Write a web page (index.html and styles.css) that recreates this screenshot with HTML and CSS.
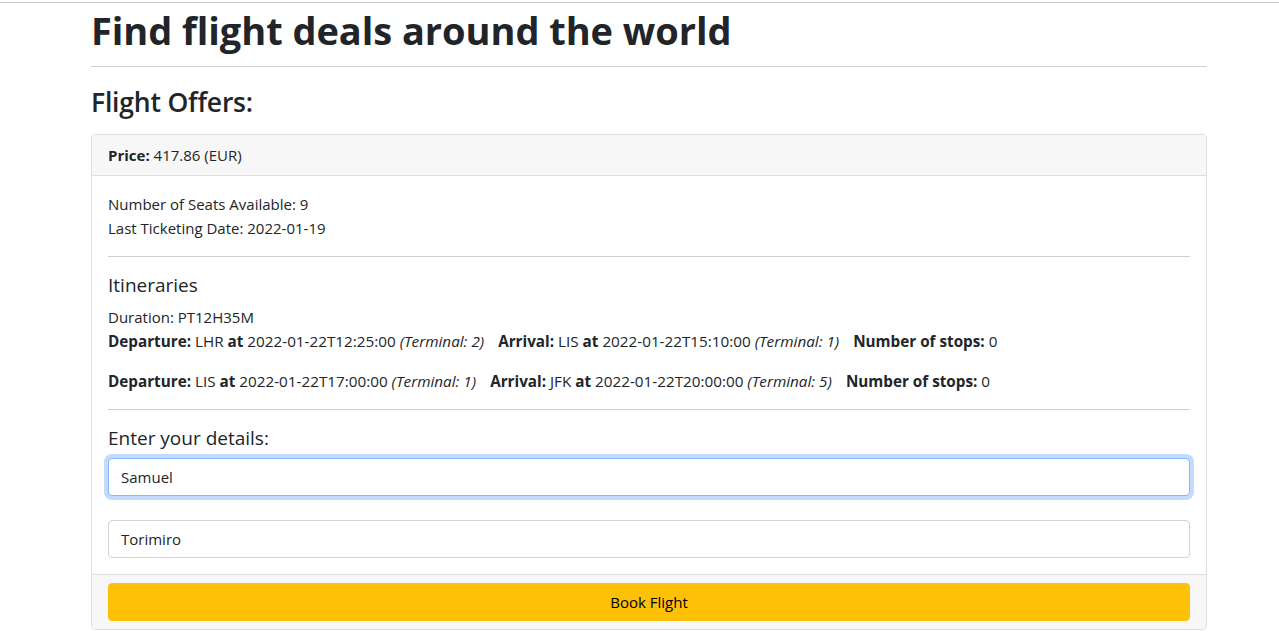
FILE: index.html
```html
<!DOCTYPE html>
<html lang="en">
<head>
<meta charset="utf-8">
<title>Flight deals</title>
<link rel="stylesheet" href="styles.css">
</head>
<body>
<div class="topline"></div>
<main class="container">
  <h1 class="title">Find flight deals around the world</h1>
  <hr class="rule">
  <h2 class="subtitle">Flight Offers:</h2>
  <section class="card">
    <div class="card-header"><b>Price:</b> 417.86 (EUR)</div>
    <div class="card-body">
      <p class="line">Number of Seats Available: 9</p>
      <p class="line">Last Ticketing Date: 2022-01-19</p>
      <hr class="divider">
      <h5 class="section-title">Itineraries</h5>
      <p class="line">Duration: PT12H35M</p>
      <p class="segment">
        <span class="part"><b>Departure:</b> LHR <b>at</b> 2022-01-22T12:25:00 <i>(Terminal: 2)</i></span>
        <span class="part"><b>Arrival:</b> LIS <b>at</b> 2022-01-22T15:10:00 <i>(Terminal: 1)</i></span>
        <span class="part"><b>Number of stops:</b> 0</span>
      </p>
      <p class="segment">
        <span class="part"><b>Departure:</b> LIS <b>at</b> 2022-01-22T17:00:00 <i>(Terminal: 1)</i></span>
        <span class="part"><b>Arrival:</b> JFK <b>at</b> 2022-01-22T20:00:00 <i>(Terminal: 5)</i></span>
        <span class="part"><b>Number of stops:</b> 0</span>
      </p>
      <hr class="divider">
      <h5 class="section-title">Enter your details:</h5>
      <form class="details">
        <input class="field field-focus" type="text" value="Samuel">
        <input class="field" type="text" value="Torimiro">
      </form>
    </div>
    <div class="card-footer">
      <button class="btn-book" type="button">Book Flight</button>
    </div>
  </section>
</main>
</body>
</html>
```
FILE: styles.css
```css
* { box-sizing: border-box; }
html, body { margin: 0; padding: 0; background: #fff; }
body {
  font-family: "Open Sans", "Noto Sans", sans-serif;
  font-size: 15px;
  line-height: 24px;
  color: #212529;
}
.topline {
  height: 3px;
  border-bottom: 1px solid #c6c6c6;
}
.container {
  width: 1116px;
  margin-left: 91px;
}
.title {
  margin: 3px 0 0;
  font-size: 38px;
  line-height: 48px;
  font-weight: 700;
  letter-spacing: -0.05px;
}
.rule {
  margin: 12px 0 0;
  border: 0;
  border-top: 1px solid #d0d0d0;
}
.subtitle {
  margin: 18px 0 0;
  font-size: 26.5px;
  line-height: 34px;
  font-weight: 600;
  letter-spacing: -0.2px;
}
.card {
  margin-top: 15px;
  border: 1px solid #dfdfdf;
  border-radius: 4px;
  overflow: hidden;
}
.card-header {
  background: #f7f7f7;
  border-bottom: 1px solid #dfdfdf;
  padding: 8px 16px;
  height: 41px;
  line-height: 24px;
}
.card-body {
  padding: 16px 16px 16px;
}
.line { margin: 0; }
.divider {
  margin: 16px 0;
  border: 0;
  border-top: 1px solid #d0d0d0;
}
.section-title {
  margin: 0 0 8px;
  font-size: 19px;
  line-height: 24px;
  font-weight: 500;
}
.segment {
  margin: 0 0 16px;
  display: flex;
  flex-wrap: wrap;
  gap: 14px;
  font-size: 15.25px;
}
.segment:last-of-type { margin-bottom: 0; }
.details {
  display: flex;
  flex-direction: column;
  gap: 24px;
}
.field {
  display: block;
  width: 100%;
  height: 38px;
  padding: 6px 12px;
  font: inherit;
  color: #212529;
  border: 1px solid #ced4da;
  border-radius: 4px;
  background: #fff;
  outline: none;
}
.field-focus {
  border-color: #86b7fe;
  box-shadow: 0 0 0 4px rgba(13, 110, 253, 0.25);
}
.card-footer {
  background: #f7f7f7;
  border-top: 1px solid #dfdfdf;
  padding: 8px 16px;
}
.btn-book {
  display: block;
  width: 100%;
  height: 38px;
  border: 1px solid #ffc107;
  background: #ffc107;
  border-radius: 4px;
  font: inherit;
  color: #000;
  cursor: pointer;
}
```
